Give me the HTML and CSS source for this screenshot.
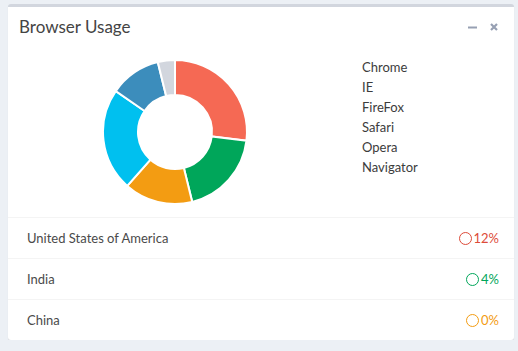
FILE: index.html
```html
<!DOCTYPE html>
<html lang="en">

<head>
  <meta charset="UTF-8">
  <meta name="viewport" content="width=device-width, initial-scale=1.0">
  <title>Browser Usage</title>
  <link rel="stylesheet" href="styles.css">
</head>

<body>
  <div class="box">
    <div class="box-header">
      <h3 class="box-title">Browser Usage</h3>
      <div class="box-tools">
        <svg class="tool-btn" width="9" height="9" viewBox="0 0 9 9">
          <path d="M0 4.5 H9" stroke="#97a0b3" stroke-width="2"/>
        </svg>
        <svg class="tool-btn" width="8" height="8" viewBox="0 0 8 8">
          <path d="M1 1 L7 7 M7 1 L1 7" stroke="#97a0b3" stroke-width="2.2"/>
        </svg>
      </div>
    </div>

    <div class="box-body">
      <div class="chart-col">
        <svg class="donut" width="150" height="150" viewBox="-75 -75 150 150">
          <g id="slices"></g>
        </svg>
      </div>
      <ul class="chart-legend">
        <li>Chrome</li>
        <li>IE</li>
        <li>FireFox</li>
        <li>Safari</li>
        <li>Opera</li>
        <li>Navigator</li>
      </ul>
    </div>

    <ul class="box-footer">
      <li class="country">
        <span>United States of America</span>
        <span class="pct red"><i class="ring"></i>12%</span>
      </li>
      <li class="country">
        <span>India</span>
        <span class="pct green"><i class="ring"></i>4%</span>
      </li>
      <li class="country">
        <span>China</span>
        <span class="pct yellow"><i class="ring"></i>0%</span>
      </li>
    </ul>
  </div>

  <script>
    const data = [
      { value: 700, color: '#f56954' },
      { value: 500, color: '#00a65a' },
      { value: 400, color: '#f39c12' },
      { value: 600, color: '#00c0ef' },
      { value: 300, color: '#3c8dbc' },
      { value: 100, color: '#d2d6de' }
    ];

    const outer = 72;
    const inner = 37;
    const total = data.reduce((sum, d) => sum + d.value, 0);

    function point(r, angle) {
      const a = (angle - 90) * Math.PI / 180;
      return `${(r * Math.cos(a)).toFixed(2)} ${(r * Math.sin(a)).toFixed(2)}`;
    }

    let start = 0;
    let html = '';
    data.forEach(d => {
      const end = start + d.value / total * 360;
      const large = end - start > 180 ? 1 : 0;
      html += `<path d="M ${point(outer, start)} A ${outer} ${outer} 0 ${large} 1 ${point(outer, end)}
        L ${point(inner, end)} A ${inner} ${inner} 0 ${large} 0 ${point(inner, start)} Z"
        fill="${d.color}" stroke="#fff" stroke-width="2"/>`;
      start = end;
    });
    document.getElementById('slices').innerHTML = html;
  </script>
</body>

</html>
```

FILE: styles.css
```css
* {
  box-sizing: border-box;
  margin: 0;
  padding: 0;
  font-family: 'Lato', 'Noto Sans', sans-serif;
}

body {
  background-color: #ecf0f5;
  color: #444;
  padding: 4px 4px 0 8px;
}

.box {
  background: #fff;
  border-top: 3px solid #d2d6de;
  border-radius: 3px;
  box-shadow: 0 1px 1px rgba(0, 0, 0, 0.1);
  width: 506px;
}

.box-header {
  display: flex;
  align-items: center;
  justify-content: space-between;
  padding: 10px 10px 10px 11px;
}

.box-title {
  font-size: 17px;
  font-weight: 400;
  line-height: 20px;
  color: #444;
}

.box-tools {
  display: flex;
  align-items: center;
  gap: 13px;
  padding-right: 6px;
}

.tool-btn {
  display: block;
}

.box-body {
  display: flex;
  padding: 10px;
}

.chart-col {
  width: 314px;
  display: flex;
  justify-content: center;
}

.donut {
  display: block;
}

.chart-legend {
  list-style: none;
  padding-left: 30px;
  font-size: 13px;
  line-height: 20px;
  color: #3c3c3c;
}

.box-footer {
  list-style: none;
}

.country {
  display: flex;
  justify-content: space-between;
  align-items: center;
  border-top: 1px solid #f4f4f4;
  padding: 10px 15px 10px 19px;
  font-size: 13px;
  line-height: 20px;
  color: #4a4a4a;
}

.pct {
  display: flex;
  align-items: center;
  gap: 2px;
}

.ring {
  display: block;
  width: 13px;
  height: 13px;
  border: 1.5px solid currentColor;
  border-radius: 50%;
}

.red {
  color: #dd4b39;
}

.green {
  color: #00a65a;
}

.yellow {
  color: #f39c12;
}
```
